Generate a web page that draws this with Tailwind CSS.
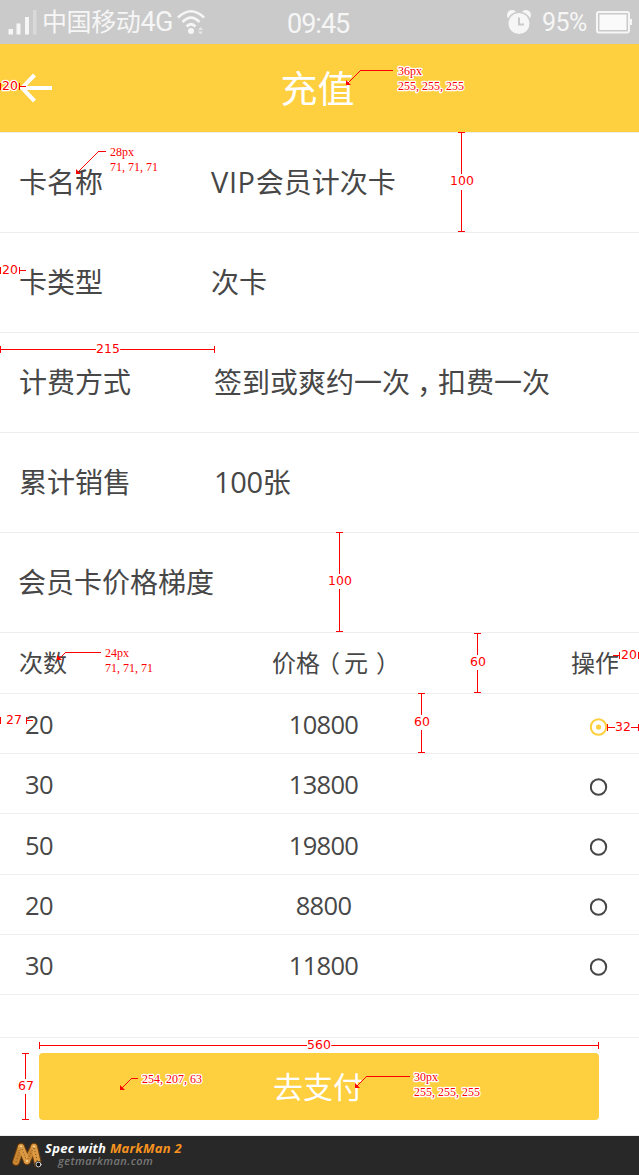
<!DOCTYPE html>
<html lang="zh-CN">
<head>
<meta charset="utf-8">
<meta name="viewport" content="width=device-width, initial-scale=1">
<title>充值</title>
<script src="https://cdn.jsdelivr.net/npm/@tailwindcss/browser@4"></script>
</head>
<body class="bg-white">
<div class="relative flex h-[1175px] w-[639px] flex-col overflow-hidden bg-white font-['Open_Sans','Noto_Sans_CJK_SC',sans-serif] text-[28px] leading-none text-[#474747]">

  <!-- Status bar -->
  <div class="grid h-11 shrink-0 grid-cols-[283px_1fr_134px] items-center bg-[#cacaca] font-['Roboto','Noto_Sans_CJK_SC',sans-serif] text-[26px] text-[#f6f6f6]">
    <div class="flex items-center">
      <svg class="ml-2 h-[27px] w-[30px] shrink-0" viewBox="0 0 30 27" fill="currentColor"><rect x="0.5" y="20" width="4.5" height="5.500"/><rect x="8.500" y="14.500" width="4" height="11"/><rect x="17" y="8" width="4" height="17.500"/><rect x="25" y="1" width="3.500" height="24.500" opacity=".35"/></svg>
      <span class="ml-1 whitespace-nowrap text-[25px] tracking-[-0.4px]">中国移动</span><span class="text-[27px] tracking-[-0.5px]">4G</span>
      <svg class="ml-1 h-[27px] w-7 shrink-0" viewBox="0 0 28 27" fill="none" stroke="currentColor" stroke-width="2.600"><path d="M1 8.500Q14 -4 27 8.500M5.500 13Q14 4.500 22.500 13M9.500 17.500Q14 13 18.500 17.500"/><circle cx="14" cy="22" r="3" fill="currentColor" stroke="none"/><path d="M21 21l2.500-3 2.500 3zM21 22.500l2.500 3 2.500-3z" fill="currentColor" stroke="none" opacity=".65"/></svg>
    </div>
    <div class="pl-1 pt-1 text-[27px] tracking-[-1px]">09:45</div>
    <div class="flex items-center">
      <svg class="ml-px h-[26px] w-[26px] shrink-0" viewBox="0 0 26 26"><g fill="#f6f6f6"><circle cx="6" cy="6" r="5"/><circle cx="20" cy="6" r="5"/></g><circle cx="13" cy="14.500" r="12" fill="#cacaca"/><circle cx="13" cy="14.500" r="10.500" fill="#f6f6f6"/><path d="M13 8.500v7h5" fill="none" stroke="#cacaca" stroke-width="2"/></svg>
      <span class="ml-[10px] w-[47px] text-[25px] tracking-[-0.5px]">95%</span>
      <svg class="ml-[7px] h-[23px] w-9 shrink-0" viewBox="0 0 36 23"><rect x="1" y="1" width="32" height="20.500" rx="2" fill="none" stroke="#f6f6f6" stroke-width="2"/><rect x="3.500" y="3.500" width="27" height="15.500" fill="#fafafa"/><rect x="34" y="8" width="2" height="6" fill="#f6f6f6"/></svg>
    </div>
  </div>

  <!-- Title bar -->
  <header class="grid h-[88px] shrink-0 grid-cols-3 items-center bg-[#fecf3f] text-white">
    <svg class="ml-5 h-8 w-8" viewBox="0 0 32 32" fill="none" stroke="currentColor" stroke-width="4"><path d="M32 16H3M14.500 3L2 16l12.500 13"/></svg>
    <h1 class="pr-1 text-center text-[37px] leading-none">充值</h1>
  </header>

  <!-- Card details -->
  <dl class="shrink-0">
    <div class="flex h-[100px] items-center border-t border-[#eee] pb-[2px] pl-[19px]"><dt class="w-48">卡名称</dt><dd><span class="text-[29px] tracking-[0.6px]">VIP</span>会员计次卡</dd></div>
    <div class="flex h-[100px] items-center border-t border-[#eee] pb-[2px] pl-[19px]"><dt class="w-48">卡类型</dt><dd>次卡</dd></div>
    <div class="flex h-[100px] items-center border-t border-[#eee] pb-[2px] pl-[19px]"><dt class="w-[195px]">计费方式</dt><dd>签到或爽约一次<span class="inline-block translate-x-[7px] translate-y-px">，</span>扣费一次</dd></div>
    <div class="flex h-[100px] items-center border-t border-[#eee] pb-[2px] pl-[19px]"><dt class="w-[195px]">累计销售</dt><dd><span class="text-[29px] tracking-[-0.3px]">100</span>张</dd></div>
    <div class="flex h-[100px] items-center border-t border-[#eee] pb-[2px] pl-[18px]"><dt>会员卡价格梯度</dt></div>
  </dl>

  <!-- Price tiers -->
  <div class="shrink-0 text-[25.5px] leading-none tracking-[-0.7px]">
    <div class="grid h-[61px] grid-cols-[200px_1fr_200px] items-center border-t border-[#eee] pb-px text-2xl leading-none tracking-normal"><span class="pl-[19px]">次数</span><span class="whitespace-nowrap pl-[72px]">价格<span class="inline-block -translate-x-1">（</span>元<span class="inline-block translate-x-2">）</span></span><span class="pr-5 text-right">操作</span></div>
    <div class="grid h-[60px] grid-cols-[200px_247px_1fr] items-center border-t border-[#eee] pt-[3px]"><span class="pl-[25px]">20</span><span class="text-center">10800</span><svg class="mr-[31px] mt-[3px] h-[18px] w-[18px] justify-self-end text-[#fecf3f]" viewBox="0 0 18 18"><circle cx="8.500" cy="9" r="7.700" fill="none" stroke="currentColor" stroke-width="2"/><circle cx="8.500" cy="9" r="2.600" fill="currentColor"/></svg></div>
    <div class="grid h-[60px] grid-cols-[200px_247px_1fr] items-center border-t border-[#eee] pt-[3px]"><span class="pl-[25px]">30</span><span class="text-center">13800</span><svg class="mr-[31px] mt-[3px] h-[18px] w-[18px] justify-self-end" viewBox="0 0 18 18"><circle cx="8.500" cy="9" r="7.700" fill="none" stroke="currentColor" stroke-width="2"/></svg></div>
    <div class="grid h-[61px] grid-cols-[200px_247px_1fr] items-center border-t border-[#eee] pt-[3px]"><span class="pl-[25px]">50</span><span class="text-center">19800</span><svg class="mr-[31px] mt-[3px] h-[18px] w-[18px] justify-self-end" viewBox="0 0 18 18"><circle cx="8.500" cy="9" r="7.700" fill="none" stroke="currentColor" stroke-width="2"/></svg></div>
    <div class="grid h-[60px] grid-cols-[200px_247px_1fr] items-center border-t border-[#eee] pt-[3px]"><span class="pl-[25px]">20</span><span class="text-center">8800</span><svg class="mr-[31px] mt-[2px] h-[18px] w-[18px] justify-self-end" viewBox="0 0 18 18"><circle cx="8.500" cy="9" r="7.700" fill="none" stroke="currentColor" stroke-width="2"/></svg></div>
    <div class="grid h-[60px] grid-cols-[200px_247px_1fr] items-center border-t border-[#eee] pt-[3px]"><span class="pl-[25px]">30</span><span class="text-center">11800</span><svg class="mr-[31px] mt-[2px] h-[18px] w-[18px] justify-self-end" viewBox="0 0 18 18"><circle cx="8.500" cy="9" r="7.700" fill="none" stroke="currentColor" stroke-width="2"/></svg></div>
    <div class="h-[43px] border-t border-[#eee]"></div>
  </div>

  <!-- Pay button -->
  <div class="h-[99px] shrink-0 border-y border-[#eee] pl-[39px] pt-[15px]">
    <button class="block h-[67px] w-[560px] rounded bg-[#fecf3f] pr-[2px] text-3xl leading-none text-white">去支付</button>
  </div>

  <!-- Spec tool footer -->
  <footer class="flex h-[39px] shrink-0 items-center bg-[#282828] pl-3 italic">
    <svg class="h-7 w-8 shrink-0" viewBox="0 0 32 28" fill="none" stroke-linecap="round"><g stroke="#6b3d0c" stroke-width="8"><path d="M4 20L9 5M9 5l6 14M15 19l7-14M22 5l4 17"/></g><g stroke="#c88632" stroke-width="6"><path d="M4 20L9 5M15 19l7-14"/></g><g stroke="#dc9a44" stroke-width="6"><path d="M9 5l6 14M22 5l4 17"/></g><g stroke="#7e4c14" stroke-width="1" stroke-dasharray="1 2" stroke-linecap="butt"><path d="M4 20L9 5l6 14 7-14 4 17"/></g><g fill="#ffe0a0"><circle cx="9" cy="4.500" r="1"/><circle cx="22" cy="4.500" r="1"/><circle cx="15" cy="19" r="1"/></g><circle cx="26.500" cy="22.500" r="3.500" fill="#111"/><circle cx="26.500" cy="22.500" r="2.500" stroke="#ddd"/></svg>
    <div class="flex flex-col whitespace-nowrap pb-[2px] font-bold">
      <span class="pl-[1px] text-[13px] leading-[13px] tracking-[0.27px] text-white">Spec with <span class="text-[#f7931e]">MarkMan 2</span></span>
      <span class="pl-[14px] text-[11px] font-semibold leading-[12px] tracking-[0.45px] text-[#777]">getmarkman.com</span>
    </div>
  </footer>

  <!-- Measurement annotations over the design -->
  <svg class="pointer-events-none absolute inset-0 h-[1175px] w-[639px]" viewBox="0 0 639 1175" fill="none">
    <g stroke="#f00" stroke-width="1" shape-rendering="crispEdges">
      <path d="M.5 83v7M19.500 83v7M19 86.500h7M.5 267v7M19.500 267v7M19 270.500h7"/>
      <path d="M.5 346v7M0 349.500h96M120 349.500h95M214.500 346v7"/>
      <path d="M458 132.500h7M461.500 132v42M461.500 190v42M458 231.500h7"/>
      <path d="M336 532.500h7M339.500 532v42M339.500 589v43M336 631.500h7"/>
      <path d="M474 633.500h7M477.500 633v22M477.500 670v22M474 692.500h7"/>
      <path d="M418 693.500h7M421.500 693v22M421.500 730v22M418 752.500h7"/>
      <path d="M619.500 652v7M613 655.500h6M638.500 652v7M.5 717v7M26.500 717v7M26 720.500h7"/>
      <path d="M607.500 724v7M607 727.500h8M631 727.500h8M638.500 724v7"/>
      <path d="M39.500 1042v7M39 1045.500h268M331 1045.500h268M598.500 1042v7"/>
      <path d="M22 1053.500h7M25.500 1053v26M25.500 1094v26M22 1119.500h7"/>
      <path d="M360 70.500h33M98 151.500h8M65 652.500h36M131 1078.500h7M366 1076.500h44"/>
    </g>
    <path d="M360.500 70.500L348 83M98.500 151.500L79 171M65.500 652.500L59 659M131.500 1078.500L122 1088M366.500 1076.500L357 1086" stroke="#f00"/>
    <path d="M346 80v5h5zM76 169v5h5zM57 655v5h5zM120 1085v5h5zM355 1083v5h5z" fill="#f00"/>
    <g class="font-['DejaVu_Sans',sans-serif] text-[12.5px]" fill="#f00" stroke="#fff" stroke-width="2.500" stroke-linejoin="round" paint-order="stroke" text-anchor="middle">
      <text x="10" y="90">20</text><text x="10" y="274">20</text><text x="108" y="353">215</text>
      <text x="462" y="185">100</text><text x="340" y="585">100</text><text x="478" y="666">60</text>
      <text x="422" y="726">60</text><text x="629" y="659">20</text><text x="14" y="724">27</text>
      <text x="623" y="731">32</text><text x="319" y="1049">560</text><text x="26" y="1090">67</text>
    </g>
    <g class="font-['Liberation_Serif',serif] text-[12px]" fill="#f00" stroke="#fff" stroke-width="2.500" stroke-linejoin="round" paint-order="stroke">
      <text x="398" y="75">36px</text><text x="398" y="90">255, 255, 255</text>
      <text x="110" y="156">28px</text><text x="110" y="171">71, 71, 71</text>
      <text x="105" y="657">24px</text><text x="105" y="672">71, 71, 71</text>
      <text x="142" y="1083">254, 207, 63</text>
      <text x="414" y="1081">30px</text><text x="414" y="1096">255, 255, 255</text>
    </g>
  </svg>
</div>
</body>
</html>
